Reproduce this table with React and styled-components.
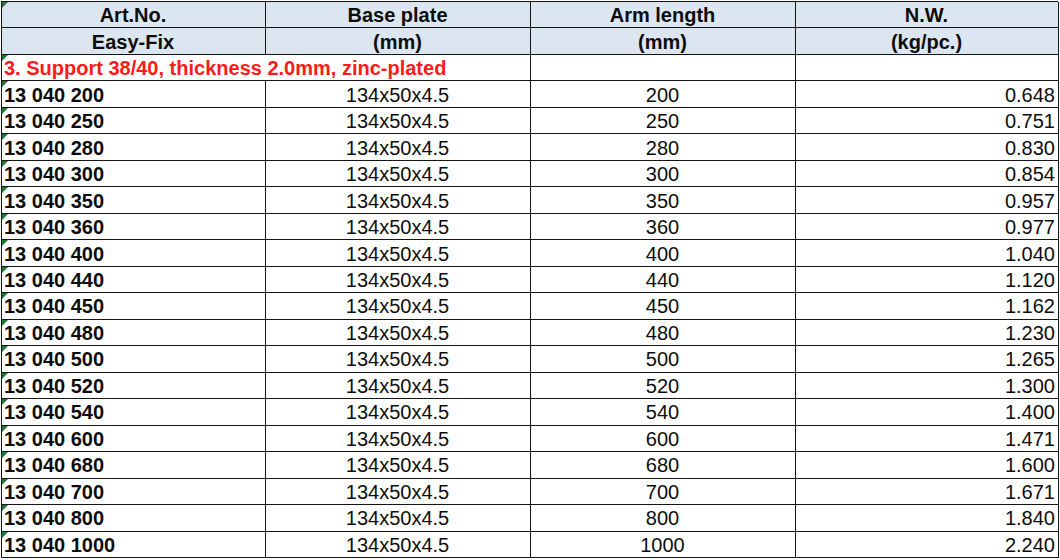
import React from "react";
import styled, { createGlobalStyle } from "styled-components";

const GlobalStyle = createGlobalStyle`
  * {
    margin: 0;
    padding: 0;
    box-sizing: border-box;
  }
  body {
    background: #ffffff;
    font-family: "Liberation Sans", Arial, sans-serif;
  }
`;

const rows = [
  ["13 040 200", "200", "0.648"],
  ["13 040 250", "250", "0.751"],
  ["13 040 280", "280", "0.830"],
  ["13 040 300", "300", "0.854"],
  ["13 040 350", "350", "0.957"],
  ["13 040 360", "360", "0.977"],
  ["13 040 400", "400", "1.040"],
  ["13 040 440", "440", "1.120"],
  ["13 040 450", "450", "1.162"],
  ["13 040 480", "480", "1.230"],
  ["13 040 500", "500", "1.265"],
  ["13 040 520", "520", "1.300"],
  ["13 040 540", "540", "1.400"],
  ["13 040 600", "600", "1.471"],
  ["13 040 680", "680", "1.600"],
  ["13 040 700", "700", "1.671"],
  ["13 040 800", "800", "1.840"],
  ["13 040 1000", "1000", "2.240"],
];

const Page = styled.div`
  width: 1060px;
  height: 560px;
  padding: 1px 2px 2px 1px;
  background: #fff;
`;

const Sheet = styled.div`
  display: grid;
  grid-template-columns: 264px 265px 265px 263px;
  grid-template-rows: repeat(21, 1fr);
  height: 557px;
  border-top: 1.5px solid #151515;
  border-left: 1.5px solid #151515;
`;

const Cell = styled.div`
  position: relative;
  display: flex;
  align-items: center;
  justify-content: ${(p) =>
    p.$align === "right" ? "flex-end" : p.$align === "left" ? "flex-start" : "center"};
  grid-column: ${(p) => (p.$span ? `span ${p.$span}` : "auto")};
  padding: 1px 3px 0 2px;
  border-right: 1.5px solid #151515;
  border-bottom: 1.5px solid #151515;
  background: ${(p) => (p.$head ? "#dce6f1" : "#ffffff")};
  color: ${(p) => (p.$red ? "#ff1a1a" : "#0d0d0d")};
  font-size: 20px;
  font-weight: ${(p) => (p.$bold ? 700 : 400)};
  line-height: 1;
  white-space: nowrap;
  overflow: visible;
`;

const Flag = styled.span`
  position: absolute;
  top: 0;
  left: 0;
  width: 0;
  height: 0;
  border-top: 6px solid #1e7a34;
  border-right: 6px solid transparent;
`;

export default function App() {
  return (
    <>
      <GlobalStyle />
      <Page>
        <Sheet>
          <Cell $head $bold>
            <Flag />
            Art.No.
          </Cell>
          <Cell $head $bold>Base plate</Cell>
          <Cell $head $bold>Arm length</Cell>
          <Cell $head $bold>N.W.</Cell>

          <Cell $head $bold>Easy-Fix</Cell>
          <Cell $head $bold>(mm)</Cell>
          <Cell $head $bold>(mm)</Cell>
          <Cell $head $bold>(kg/pc.)</Cell>

          <Cell $span={2} $align="left" $bold $red>
            <Flag />
            3. Support 38/40, thickness 2.0mm, zinc-plated
          </Cell>
          <Cell />
          <Cell />

          {rows.map(([art, arm, nw]) => (
            <React.Fragment key={art}>
              <Cell $align="left" $bold>
                <Flag />
                {art}
              </Cell>
              <Cell>134x50x4.5</Cell>
              <Cell>{arm}</Cell>
              <Cell $align="right">{nw}</Cell>
            </React.Fragment>
          ))}
        </Sheet>
      </Page>
    </>
  );
}
